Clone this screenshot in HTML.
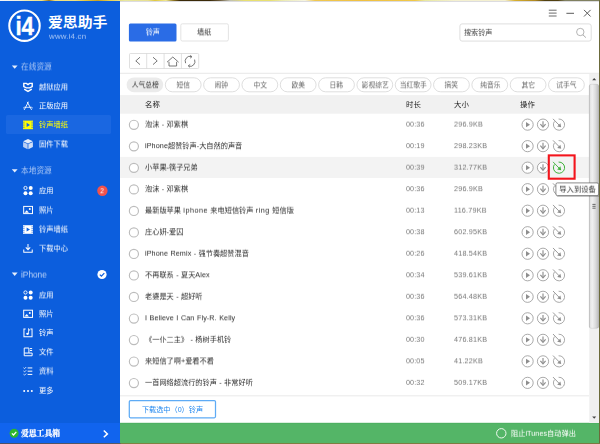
<!DOCTYPE html>
<html lang="zh-CN"><head><meta charset="utf-8"><title>爱思助手</title>
<style>
*{box-sizing:border-box;margin:0;padding:0}
html,body{width:600px;height:444px;overflow:hidden;background:#fff}
body{font-family:"Liberation Sans","Noto Sans CJK SC",sans-serif;font-size:7.1px;color:#333;position:relative}
#app{position:absolute;left:0;top:0;width:600px;height:444px;overflow:hidden;background:#fff}
#bg{position:absolute;left:0;top:0;width:600px;height:444px}
.t{position:absolute;line-height:10px;height:10px;white-space:nowrap}
.serif{font-family:"Liberation Serif","Noto Serif CJK SC",serif}
.sh{left:21px;color:#a9c6f5;font-size:7.7px}
.si{left:38.6px;color:#fff;font-size:7.25px}
.pill{width:36.6px;text-align:center;font-size:6.75px;color:#666}
.th{font-size:7.4px;color:#222}
.nm{left:145.3px;color:#2a2a2a;word-spacing:0.4px;font-size:7.2px}
.l{letter-spacing:0.1px}
.w{letter-spacing:0.5px}
.du{left:406px;color:#757575;font-size:7.2px;letter-spacing:0.12px}
.sz{left:454px;color:#757575;font-size:7.2px;letter-spacing:0.2px}
</style></head>
<body><div id="app">
<svg id="bg" width="600" height="444" viewBox="0 0 600 444">
<rect x="0" y="0" width="120" height="444" fill="#0c5edd"/>
<rect x="0" y="423" width="120" height="21" fill="#1164ee"/>
<rect x="120" y="423" width="480" height="21" fill="#54b567"/><rect x="120" y="422.8" width="480" height="1" fill="#4eae61"/>
<defs><linearGradient id="tg" gradientUnits="userSpaceOnUse" x1="0" y1="0" x2="600" y2="0"><stop offset="0.0000" stop-color="#f2f5fa"/><stop offset="0.0300" stop-color="#f2f2e4"/><stop offset="0.0433" stop-color="#f2ecb0"/><stop offset="0.0700" stop-color="#f0e080"/><stop offset="0.0817" stop-color="#98741c"/><stop offset="0.0917" stop-color="#f0e080"/><stop offset="0.1250" stop-color="#f0e080"/><stop offset="0.1417" stop-color="#e8c840"/><stop offset="0.1633" stop-color="#c8a020"/><stop offset="0.1833" stop-color="#e8d050"/><stop offset="0.2083" stop-color="#e8e8a0"/><stop offset="0.2467" stop-color="#e8e090"/><stop offset="0.2583" stop-color="#e0c840"/><stop offset="0.2767" stop-color="#f0e890"/><stop offset="0.2900" stop-color="#8a7020"/><stop offset="0.3000" stop-color="#3a2a08"/><stop offset="0.3500" stop-color="#3a2a08"/><stop offset="0.3667" stop-color="#706040"/><stop offset="0.3833" stop-color="#c0c0b0"/><stop offset="0.4083" stop-color="#e8e070"/><stop offset="0.4500" stop-color="#e8e070"/><stop offset="0.4750" stop-color="#ececb8"/><stop offset="0.5083" stop-color="#f6f4e0"/><stop offset="0.5250" stop-color="#f0c850"/><stop offset="0.6000" stop-color="#f0c040"/><stop offset="0.6917" stop-color="#f0c848"/><stop offset="0.7083" stop-color="#e8e8a0"/><stop offset="0.7583" stop-color="#f4f0d0"/><stop offset="0.8417" stop-color="#f4f0d0"/><stop offset="0.8583" stop-color="#d8b030"/><stop offset="0.8917" stop-color="#b08820"/><stop offset="0.9083" stop-color="#504010"/><stop offset="0.9300" stop-color="#504010"/><stop offset="0.9417" stop-color="#808060"/><stop offset="1.0000" stop-color="#808060"/></linearGradient><linearGradient id="bgd" gradientUnits="userSpaceOnUse" x1="0" y1="0" x2="600" y2="0"><stop offset="0" stop-color="#4a5068"/><stop offset="0.2" stop-color="#565a64"/><stop offset="0.202" stop-color="#7e8440"/><stop offset="1" stop-color="#7a7a40"/></linearGradient><linearGradient id="thumb" x1="0" y1="0" x2="1" y2="0"><stop offset="0" stop-color="#bdbdbd"/><stop offset="0.14" stop-color="#e6e6e6"/><stop offset="0.32" stop-color="#f0f0f0"/><stop offset="0.62" stop-color="#dedede"/><stop offset="0.86" stop-color="#c8c8c8"/><stop offset="1" stop-color="#b4b4b4"/></linearGradient></defs>
<rect x="120" y="1" width="479" height="1" fill="#dcdce0"/>
<rect x="6" y="115" width="105" height="19" rx="1.5" fill="#1a67e1"/>
<circle cx="24.5" cy="25.7" r="15.2" fill="#0c5edd" stroke="#fff" stroke-width="2.1"/>
<text x="15.4" y="35.1" font-family="Liberation Sans, sans-serif" font-weight="bold" font-size="25" fill="#fff" stroke="#fff" stroke-width="0.4" textLength="18.6" lengthAdjust="spacingAndGlyphs">i4</text>
<path d="M11.8 65.4 h5.8 l-2.9 3.4 Z" fill="#e6eefc"/>
<g transform="translate(22.00 81.00)"><path d="M1.8 2.4 H4.4 L6 3.6 L7.6 2.4 H10.2 V5.6 L7.8 6.9 H4.2 L1.8 5.6 Z" fill="none" stroke="#fff" stroke-width="1.4"/><path d="M2.2 8.2 L6 10.4 L9.8 8.2" fill="none" stroke="#fff" stroke-width="1.4"/></g>
<g transform="translate(22.00 99.70)"><path d="M2.2 10.2 L6.5 2 M5.2 2.2 L9.6 10.2" fill="none" stroke="#fff" stroke-width="0.9"/><path d="M1.2 8.4 L2.4 7.6 H9.6 L10.8 8.4" fill="none" stroke="#fff" stroke-width="0.8"/></g>
<g transform="translate(22.00 118.60)"><rect x="1" y="2" width="10" height="8.6" fill="#ffff00"/><path d="M4.6 4.2 L8 6.3 L4.6 8.4 Z" fill="#1a67e1"/><path d="M1 3.6 h1.6 M1 5.4 h1.6 M1 7.2 h1.6 M1 9 h1.6 M9.4 3.6 h1.6 M9.4 5.4 h1.6 M9.4 7.2 h1.6 M9.4 9 h1.6" stroke="#1a67e1" stroke-width="0.6"/></g>
<g transform="translate(22.00 138.00)"><path d="M6 1 L10.9 3.2 L6 5.5 L1.1 3.2 Z" fill="#e4ecfb"/><path d="M1.1 3.9 L5.6 6.1 V11.2 L1.1 9 Z" fill="#b9cef4"/><path d="M10.9 3.9 L6.4 6.1 V11.2 L10.9 9 Z" fill="#d2e0f8"/></g>
<path d="M11.8 169.2 h5.8 l-2.9 3.4 Z" fill="#e6eefc"/>
<g transform="translate(22.00 184.50) translate(6 6) scale(0.9) translate(-6 -6)"><circle cx="3.2" cy="3.2" r="1.8" fill="none" stroke="#fff" stroke-width="1"/><circle cx="9" cy="3.2" r="2.2" fill="#fff"/><circle cx="3.2" cy="9" r="2.2" fill="#fff"/><circle cx="9" cy="9" r="2.2" fill="#fff"/></g>
<g transform="translate(22.00 204.00) translate(6 6) scale(0.9) translate(-6 -6)"><rect x="1.2" y="2" width="9.8" height="8" fill="none" stroke="#fff" stroke-width="1.1"/><path d="M2 9 L4.6 6.2 L7 9 Z" fill="#fff"/><circle cx="8" cy="5" r="1.1" fill="#fff"/></g>
<g transform="translate(22.00 223.20)"><rect x="1" y="2" width="10" height="8.6" fill="#fff"/><path d="M4.6 4.2 L8 6.3 L4.6 8.4 Z" fill="#0c5edd"/><path d="M1 3.6 h1.6 M1 5.4 h1.6 M1 7.2 h1.6 M1 9 h1.6 M9.4 3.6 h1.6 M9.4 5.4 h1.6 M9.4 7.2 h1.6 M9.4 9 h1.6" stroke="#0c5edd" stroke-width="0.6"/></g>
<g transform="translate(22.00 242.30) translate(6 6) scale(0.92) translate(-6 -6)"><path d="M6 1.4 V7 M3.6 5 L6 7.6 L8.4 5" fill="none" stroke="#fff" stroke-width="1.1"/><path d="M1.4 7.4 V10.4 H10.6 V7.4" fill="none" stroke="#fff" stroke-width="1.1"/></g>
<path d="M11.8 272.6 h5.8 l-2.9 3.4 Z" fill="#e6eefc"/>
<g transform="translate(22.00 289.00) translate(6 6) scale(0.9) translate(-6 -6)"><circle cx="3.2" cy="3.2" r="1.8" fill="none" stroke="#fff" stroke-width="1"/><circle cx="9" cy="3.2" r="2.2" fill="#fff"/><circle cx="3.2" cy="9" r="2.2" fill="#fff"/><circle cx="9" cy="9" r="2.2" fill="#fff"/></g>
<g transform="translate(22.00 307.80) translate(6 6) scale(0.9) translate(-6 -6)"><rect x="1.2" y="2" width="9.8" height="8" fill="none" stroke="#fff" stroke-width="1.1"/><path d="M2 9 L4.6 6.2 L7 9 Z" fill="#fff"/><circle cx="8" cy="5" r="1.1" fill="#fff"/></g>
<g transform="translate(22.00 326.60) translate(6 6) scale(0.92) translate(-6 -6)"><path d="M3.4 2 H1.6 V10.4 H10.4 V2 H8.6" fill="none" stroke="#fff" stroke-width="1.1"/><path d="M6.6 1.6 V7" stroke="#fff" stroke-width="0.9" fill="none"/><path d="M6.6 1.6 Q8 2.4 7.8 4" stroke="#fff" stroke-width="0.8" fill="none"/><ellipse cx="5.5" cy="7.3" rx="1.5" ry="1.2" fill="#fff"/></g>
<g transform="translate(22.00 345.80) translate(6 6) scale(0.9) translate(-6 -6)"><path d="M1.8 1.8 H7 V7.4 H1.8 Z M1.8 7.4 V10.4 H10.6 V7.4 M7 7.4 H10.6 M8.2 2.4 H10.6 M8.2 4.6 H10.6" fill="none" stroke="#fff" stroke-width="1.1"/></g>
<g transform="translate(22.00 365.00) translate(6 6) scale(0.9) translate(-6 -6)"><path d="M5.6 2.6 H10.8 M5.6 6.2 H10.8 M5.6 9.8 H10.8" stroke="#fff" stroke-width="1.1"/><path d="M1 2.4 L2.2 3.4 L4 1.6 M1 6 L2.2 7 L4 5.2 M1 9.6 L2.2 10.6 L4 8.8" stroke="#fff" stroke-width="0.9" fill="none"/></g>
<g transform="translate(22.00 384.50)"><circle cx="2.2" cy="6.6" r="1" fill="#fff"/><circle cx="6" cy="6.6" r="1" fill="#fff"/><circle cx="9.8" cy="6.6" r="1" fill="#fff"/></g>
<circle cx="102.4" cy="190.8" r="5.2" fill="#f2524c"/>
<circle cx="102" cy="274.5" r="4.6" fill="#fff"/><path d="M99.8 274.6 L101.4 276.2 L104.3 273.1" fill="none" stroke="#0c5edd" stroke-width="1.2"/>
<circle cx="14.1" cy="433.3" r="4.5" fill="#2eb62e"/><path d="M11.9 433.4 L13.5 435 L16.3 431.9" fill="none" stroke="#fff" stroke-width="1.3"/>
<path d="M103.8 430.5 L107.4 433.9 L103.8 437.3" fill="none" stroke="#fff" stroke-width="1.5"/>
<rect x="128.9" y="23.4" width="47.6" height="18" rx="1.5" fill="#2a6ce6"/>
<rect x="180.8" y="23.8" width="47.6" height="17.2" rx="1.5" fill="#fff" stroke="#dcdcdc" stroke-width="0.8"/>
<g transform="translate(548 7)" stroke="#5a5a5a" fill="none"><path d="M0.8 3.2 H8.6 M0.8 6.1 H8.6 M0.8 9 H8.6" stroke-width="0.9"/><path d="M18.4 6.3 H26" stroke-width="1"/><path d="M36 2.9 L42.6 9.5 M42.6 2.9 L36 9.5" stroke-width="1"/></g>
<rect x="459.9" y="23.9" width="131.3" height="17.2" rx="2.2" fill="#fff" stroke="#dadada" stroke-width="0.9"/>
<g transform="translate(575 27)" stroke="#a2a2a2" fill="none"><circle cx="5.3" cy="5" r="3.7" stroke-width="0.8"/><path d="M7.9 7.8 L10.9 10.6" stroke-width="0.9"/></g>
<g transform="translate(129 53)"><rect x="0.5" y="0.5" width="69.2" height="15" rx="1" fill="#fff" stroke="#d2d2d2" stroke-width="0.7"/>
<path d="M17.7 0.5 V15.5 M35.1 0.5 V15.5 M52.4 0.5 V15.5" stroke="#d2d2d2" stroke-width="0.7"/>
<g fill="none" stroke="#555"><path d="M11 4.2 L6.8 7.9 L11 11.6" stroke-width="0.8"/>
<path d="M24 4.2 L28.2 7.9 L24 11.6" stroke-width="0.8"/>
<path d="M38 9.2 L43.8 4 L49.6 9.2 M40 8.8 V13 H47.6 V8.8" stroke-width="0.8"/>
<path d="M56.6 10.2 A4.6 4.9 0 0 1 62.4 3.6 M65.6 6.6 A4.6 4.9 0 0 1 59.6 13" stroke-width="0.8"/>
<path d="M61.2 2.2 L63 3.8 L61 5.2 M61 14.4 L59.2 12.8 L61.2 11.4" stroke-width="0.7"/></g></g>
<rect x="120" y="72.8" width="479" height="0.9" fill="#e4e4e4"/>
<rect x="126.60" y="77.4" width="36.6" height="14.8" rx="7.4" fill="#ebebeb"/>
<rect x="165.32" y="77.8" width="35.8" height="14" rx="7" fill="#fff" stroke="#d6d6d6" stroke-width="0.8"/>
<rect x="203.64" y="77.8" width="35.8" height="14" rx="7" fill="#fff" stroke="#d6d6d6" stroke-width="0.8"/>
<rect x="241.96" y="77.8" width="35.8" height="14" rx="7" fill="#fff" stroke="#d6d6d6" stroke-width="0.8"/>
<rect x="280.28" y="77.8" width="35.8" height="14" rx="7" fill="#fff" stroke="#d6d6d6" stroke-width="0.8"/>
<rect x="318.60" y="77.8" width="35.8" height="14" rx="7" fill="#fff" stroke="#d6d6d6" stroke-width="0.8"/>
<rect x="356.92" y="77.8" width="35.8" height="14" rx="7" fill="#fff" stroke="#d6d6d6" stroke-width="0.8"/>
<rect x="395.24" y="77.8" width="35.8" height="14" rx="7" fill="#fff" stroke="#d6d6d6" stroke-width="0.8"/>
<rect x="433.56" y="77.8" width="35.8" height="14" rx="7" fill="#fff" stroke="#d6d6d6" stroke-width="0.8"/>
<rect x="471.88" y="77.8" width="35.8" height="14" rx="7" fill="#fff" stroke="#d6d6d6" stroke-width="0.8"/>
<rect x="510.20" y="77.8" width="35.8" height="14" rx="7" fill="#fff" stroke="#d6d6d6" stroke-width="0.8"/>
<rect x="548.52" y="77.8" width="35.8" height="14" rx="7" fill="#fff" stroke="#d6d6d6" stroke-width="0.8"/>
<rect x="120.1" y="95.1" width="469.1" height="18.6" fill="#f1f1f1"/>
<rect x="120.1" y="156.9" width="469.1" height="21.1" fill="#f3f3f3"/>
<circle cx="133.9" cy="124.83" r="4.55" fill="#fff" stroke="#bcbcbc" stroke-width="1.15"/>
<g transform="translate(520.40 117.63)"><circle cx="7.2" cy="7" r="5.6" fill="#fff" stroke="#8e8e8e" stroke-width="0.75"/>
<path d="M5.6 4.3 L9.6 7 L5.6 9.7 Z" fill="#8e8e8e"/>
<circle cx="22.6" cy="7" r="5.6" fill="#fff" stroke="#8e8e8e" stroke-width="0.75"/>
<path d="M22.6 3.6 V9" fill="none" stroke="#8e8e8e" stroke-width="1.15"/><path d="M20 6.5 L22.6 9.6 L25.2 6.5" fill="none" stroke="#8e8e8e" stroke-width="1.15"/>
<g transform="translate(-0.4 0)"><path d="M34.4 3.8 A5.6 5.6 0 1 0 38.6 1.4" fill="none" stroke="#8e8e8e" stroke-width="0.75"/>
<path d="M33 1.2 L39.6 8" fill="none" stroke="#8e8e8e" stroke-width="0.9"/>
<path d="M41.2 9.6 L37.2 8.8 L40.4 5.6 Z" fill="#8e8e8e"/></g></g>
<circle cx="133.9" cy="146.35" r="4.55" fill="#fff" stroke="#bcbcbc" stroke-width="1.15"/>
<g transform="translate(520.40 139.15)"><circle cx="7.2" cy="7" r="5.6" fill="#fff" stroke="#8e8e8e" stroke-width="0.75"/>
<path d="M5.6 4.3 L9.6 7 L5.6 9.7 Z" fill="#8e8e8e"/>
<circle cx="22.6" cy="7" r="5.6" fill="#fff" stroke="#8e8e8e" stroke-width="0.75"/>
<path d="M22.6 3.6 V9" fill="none" stroke="#8e8e8e" stroke-width="1.15"/><path d="M20 6.5 L22.6 9.6 L25.2 6.5" fill="none" stroke="#8e8e8e" stroke-width="1.15"/>
<g transform="translate(-0.4 0)"><path d="M34.4 3.8 A5.6 5.6 0 1 0 38.6 1.4" fill="none" stroke="#8e8e8e" stroke-width="0.75"/>
<path d="M33 1.2 L39.6 8" fill="none" stroke="#8e8e8e" stroke-width="0.9"/>
<path d="M41.2 9.6 L37.2 8.8 L40.4 5.6 Z" fill="#8e8e8e"/></g></g>
<circle cx="133.9" cy="167.87" r="4.55" fill="#fff" stroke="#bcbcbc" stroke-width="1.15"/>
<g transform="translate(520.40 160.67)"><circle cx="7.2" cy="7" r="5.6" fill="#fff" stroke="#8e8e8e" stroke-width="0.75"/>
<path d="M5.6 4.3 L9.6 7 L5.6 9.7 Z" fill="#8e8e8e"/>
<circle cx="22.6" cy="7" r="5.6" fill="#fff" stroke="#8e8e8e" stroke-width="0.75"/>
<path d="M22.6 3.6 V9" fill="none" stroke="#8e8e8e" stroke-width="1.15"/><path d="M20 6.5 L22.6 9.6 L25.2 6.5" fill="none" stroke="#8e8e8e" stroke-width="1.15"/>
<g transform="translate(-0.4 0)"><path d="M34.4 3.8 A5.6 5.6 0 1 0 38.6 1.4" fill="none" stroke="#3fb23a" stroke-width="1.0"/>
<path d="M33 1.2 L39.6 8" fill="none" stroke="#3fb23a" stroke-width="0.9"/>
<path d="M41.2 9.6 L37.2 8.8 L40.4 5.6 Z" fill="#3fb23a"/></g></g>
<circle cx="133.9" cy="189.39" r="4.55" fill="#fff" stroke="#bcbcbc" stroke-width="1.15"/>
<g transform="translate(520.40 182.19)"><circle cx="7.2" cy="7" r="5.6" fill="#fff" stroke="#8e8e8e" stroke-width="0.75"/>
<path d="M5.6 4.3 L9.6 7 L5.6 9.7 Z" fill="#8e8e8e"/>
<circle cx="22.6" cy="7" r="5.6" fill="#fff" stroke="#8e8e8e" stroke-width="0.75"/>
<path d="M22.6 3.6 V9" fill="none" stroke="#8e8e8e" stroke-width="1.15"/><path d="M20 6.5 L22.6 9.6 L25.2 6.5" fill="none" stroke="#8e8e8e" stroke-width="1.15"/>
<g transform="translate(-0.4 0)"><path d="M34.4 3.8 A5.6 5.6 0 1 0 38.6 1.4" fill="none" stroke="#8e8e8e" stroke-width="0.75"/>
<path d="M33 1.2 L39.6 8" fill="none" stroke="#8e8e8e" stroke-width="0.9"/>
<path d="M41.2 9.6 L37.2 8.8 L40.4 5.6 Z" fill="#8e8e8e"/></g></g>
<circle cx="133.9" cy="210.91" r="4.55" fill="#fff" stroke="#bcbcbc" stroke-width="1.15"/>
<g transform="translate(520.40 203.71)"><circle cx="7.2" cy="7" r="5.6" fill="#fff" stroke="#8e8e8e" stroke-width="0.75"/>
<path d="M5.6 4.3 L9.6 7 L5.6 9.7 Z" fill="#8e8e8e"/>
<circle cx="22.6" cy="7" r="5.6" fill="#fff" stroke="#8e8e8e" stroke-width="0.75"/>
<path d="M22.6 3.6 V9" fill="none" stroke="#8e8e8e" stroke-width="1.15"/><path d="M20 6.5 L22.6 9.6 L25.2 6.5" fill="none" stroke="#8e8e8e" stroke-width="1.15"/>
<g transform="translate(-0.4 0)"><path d="M34.4 3.8 A5.6 5.6 0 1 0 38.6 1.4" fill="none" stroke="#8e8e8e" stroke-width="0.75"/>
<path d="M33 1.2 L39.6 8" fill="none" stroke="#8e8e8e" stroke-width="0.9"/>
<path d="M41.2 9.6 L37.2 8.8 L40.4 5.6 Z" fill="#8e8e8e"/></g></g>
<circle cx="133.9" cy="232.43" r="4.55" fill="#fff" stroke="#bcbcbc" stroke-width="1.15"/>
<g transform="translate(520.40 225.23)"><circle cx="7.2" cy="7" r="5.6" fill="#fff" stroke="#8e8e8e" stroke-width="0.75"/>
<path d="M5.6 4.3 L9.6 7 L5.6 9.7 Z" fill="#8e8e8e"/>
<circle cx="22.6" cy="7" r="5.6" fill="#fff" stroke="#8e8e8e" stroke-width="0.75"/>
<path d="M22.6 3.6 V9" fill="none" stroke="#8e8e8e" stroke-width="1.15"/><path d="M20 6.5 L22.6 9.6 L25.2 6.5" fill="none" stroke="#8e8e8e" stroke-width="1.15"/>
<g transform="translate(-0.4 0)"><path d="M34.4 3.8 A5.6 5.6 0 1 0 38.6 1.4" fill="none" stroke="#8e8e8e" stroke-width="0.75"/>
<path d="M33 1.2 L39.6 8" fill="none" stroke="#8e8e8e" stroke-width="0.9"/>
<path d="M41.2 9.6 L37.2 8.8 L40.4 5.6 Z" fill="#8e8e8e"/></g></g>
<circle cx="133.9" cy="253.95" r="4.55" fill="#fff" stroke="#bcbcbc" stroke-width="1.15"/>
<g transform="translate(520.40 246.75)"><circle cx="7.2" cy="7" r="5.6" fill="#fff" stroke="#8e8e8e" stroke-width="0.75"/>
<path d="M5.6 4.3 L9.6 7 L5.6 9.7 Z" fill="#8e8e8e"/>
<circle cx="22.6" cy="7" r="5.6" fill="#fff" stroke="#8e8e8e" stroke-width="0.75"/>
<path d="M22.6 3.6 V9" fill="none" stroke="#8e8e8e" stroke-width="1.15"/><path d="M20 6.5 L22.6 9.6 L25.2 6.5" fill="none" stroke="#8e8e8e" stroke-width="1.15"/>
<g transform="translate(-0.4 0)"><path d="M34.4 3.8 A5.6 5.6 0 1 0 38.6 1.4" fill="none" stroke="#8e8e8e" stroke-width="0.75"/>
<path d="M33 1.2 L39.6 8" fill="none" stroke="#8e8e8e" stroke-width="0.9"/>
<path d="M41.2 9.6 L37.2 8.8 L40.4 5.6 Z" fill="#8e8e8e"/></g></g>
<circle cx="133.9" cy="275.47" r="4.55" fill="#fff" stroke="#bcbcbc" stroke-width="1.15"/>
<g transform="translate(520.40 268.27)"><circle cx="7.2" cy="7" r="5.6" fill="#fff" stroke="#8e8e8e" stroke-width="0.75"/>
<path d="M5.6 4.3 L9.6 7 L5.6 9.7 Z" fill="#8e8e8e"/>
<circle cx="22.6" cy="7" r="5.6" fill="#fff" stroke="#8e8e8e" stroke-width="0.75"/>
<path d="M22.6 3.6 V9" fill="none" stroke="#8e8e8e" stroke-width="1.15"/><path d="M20 6.5 L22.6 9.6 L25.2 6.5" fill="none" stroke="#8e8e8e" stroke-width="1.15"/>
<g transform="translate(-0.4 0)"><path d="M34.4 3.8 A5.6 5.6 0 1 0 38.6 1.4" fill="none" stroke="#8e8e8e" stroke-width="0.75"/>
<path d="M33 1.2 L39.6 8" fill="none" stroke="#8e8e8e" stroke-width="0.9"/>
<path d="M41.2 9.6 L37.2 8.8 L40.4 5.6 Z" fill="#8e8e8e"/></g></g>
<circle cx="133.9" cy="296.99" r="4.55" fill="#fff" stroke="#bcbcbc" stroke-width="1.15"/>
<g transform="translate(520.40 289.79)"><circle cx="7.2" cy="7" r="5.6" fill="#fff" stroke="#8e8e8e" stroke-width="0.75"/>
<path d="M5.6 4.3 L9.6 7 L5.6 9.7 Z" fill="#8e8e8e"/>
<circle cx="22.6" cy="7" r="5.6" fill="#fff" stroke="#8e8e8e" stroke-width="0.75"/>
<path d="M22.6 3.6 V9" fill="none" stroke="#8e8e8e" stroke-width="1.15"/><path d="M20 6.5 L22.6 9.6 L25.2 6.5" fill="none" stroke="#8e8e8e" stroke-width="1.15"/>
<g transform="translate(-0.4 0)"><path d="M34.4 3.8 A5.6 5.6 0 1 0 38.6 1.4" fill="none" stroke="#8e8e8e" stroke-width="0.75"/>
<path d="M33 1.2 L39.6 8" fill="none" stroke="#8e8e8e" stroke-width="0.9"/>
<path d="M41.2 9.6 L37.2 8.8 L40.4 5.6 Z" fill="#8e8e8e"/></g></g>
<circle cx="133.9" cy="318.51" r="4.55" fill="#fff" stroke="#bcbcbc" stroke-width="1.15"/>
<g transform="translate(520.40 311.31)"><circle cx="7.2" cy="7" r="5.6" fill="#fff" stroke="#8e8e8e" stroke-width="0.75"/>
<path d="M5.6 4.3 L9.6 7 L5.6 9.7 Z" fill="#8e8e8e"/>
<circle cx="22.6" cy="7" r="5.6" fill="#fff" stroke="#8e8e8e" stroke-width="0.75"/>
<path d="M22.6 3.6 V9" fill="none" stroke="#8e8e8e" stroke-width="1.15"/><path d="M20 6.5 L22.6 9.6 L25.2 6.5" fill="none" stroke="#8e8e8e" stroke-width="1.15"/>
<g transform="translate(-0.4 0)"><path d="M34.4 3.8 A5.6 5.6 0 1 0 38.6 1.4" fill="none" stroke="#8e8e8e" stroke-width="0.75"/>
<path d="M33 1.2 L39.6 8" fill="none" stroke="#8e8e8e" stroke-width="0.9"/>
<path d="M41.2 9.6 L37.2 8.8 L40.4 5.6 Z" fill="#8e8e8e"/></g></g>
<circle cx="133.9" cy="340.03" r="4.55" fill="#fff" stroke="#bcbcbc" stroke-width="1.15"/>
<g transform="translate(520.40 332.83)"><circle cx="7.2" cy="7" r="5.6" fill="#fff" stroke="#8e8e8e" stroke-width="0.75"/>
<path d="M5.6 4.3 L9.6 7 L5.6 9.7 Z" fill="#8e8e8e"/>
<circle cx="22.6" cy="7" r="5.6" fill="#fff" stroke="#8e8e8e" stroke-width="0.75"/>
<path d="M22.6 3.6 V9" fill="none" stroke="#8e8e8e" stroke-width="1.15"/><path d="M20 6.5 L22.6 9.6 L25.2 6.5" fill="none" stroke="#8e8e8e" stroke-width="1.15"/>
<g transform="translate(-0.4 0)"><path d="M34.4 3.8 A5.6 5.6 0 1 0 38.6 1.4" fill="none" stroke="#8e8e8e" stroke-width="0.75"/>
<path d="M33 1.2 L39.6 8" fill="none" stroke="#8e8e8e" stroke-width="0.9"/>
<path d="M41.2 9.6 L37.2 8.8 L40.4 5.6 Z" fill="#8e8e8e"/></g></g>
<circle cx="133.9" cy="361.55" r="4.55" fill="#fff" stroke="#bcbcbc" stroke-width="1.15"/>
<g transform="translate(520.40 354.35)"><circle cx="7.2" cy="7" r="5.6" fill="#fff" stroke="#8e8e8e" stroke-width="0.75"/>
<path d="M5.6 4.3 L9.6 7 L5.6 9.7 Z" fill="#8e8e8e"/>
<circle cx="22.6" cy="7" r="5.6" fill="#fff" stroke="#8e8e8e" stroke-width="0.75"/>
<path d="M22.6 3.6 V9" fill="none" stroke="#8e8e8e" stroke-width="1.15"/><path d="M20 6.5 L22.6 9.6 L25.2 6.5" fill="none" stroke="#8e8e8e" stroke-width="1.15"/>
<g transform="translate(-0.4 0)"><path d="M34.4 3.8 A5.6 5.6 0 1 0 38.6 1.4" fill="none" stroke="#8e8e8e" stroke-width="0.75"/>
<path d="M33 1.2 L39.6 8" fill="none" stroke="#8e8e8e" stroke-width="0.9"/>
<path d="M41.2 9.6 L37.2 8.8 L40.4 5.6 Z" fill="#8e8e8e"/></g></g>
<circle cx="133.9" cy="383.07" r="4.55" fill="#fff" stroke="#bcbcbc" stroke-width="1.15"/>
<g transform="translate(520.40 375.87)"><circle cx="7.2" cy="7" r="5.6" fill="#fff" stroke="#8e8e8e" stroke-width="0.75"/>
<path d="M5.6 4.3 L9.6 7 L5.6 9.7 Z" fill="#8e8e8e"/>
<circle cx="22.6" cy="7" r="5.6" fill="#fff" stroke="#8e8e8e" stroke-width="0.75"/>
<path d="M22.6 3.6 V9" fill="none" stroke="#8e8e8e" stroke-width="1.15"/><path d="M20 6.5 L22.6 9.6 L25.2 6.5" fill="none" stroke="#8e8e8e" stroke-width="1.15"/>
<g transform="translate(-0.4 0)"><path d="M34.4 3.8 A5.6 5.6 0 1 0 38.6 1.4" fill="none" stroke="#8e8e8e" stroke-width="0.75"/>
<path d="M33 1.2 L39.6 8" fill="none" stroke="#8e8e8e" stroke-width="0.9"/>
<path d="M41.2 9.6 L37.2 8.8 L40.4 5.6 Z" fill="#8e8e8e"/></g></g>
<rect x="548.8" y="155.4" width="25.8" height="23.3" fill="none" stroke="#f3141c" stroke-width="2.1"/>
<rect x="589.2" y="74" width="9.8" height="349" fill="#f0f0f0"/>
<rect x="589.2" y="84.3" width="9.6" height="244" rx="2" fill="url(#thumb)" stroke="#000" stroke-opacity="0.10" stroke-width="0.8"/>
<path d="M592.2 80.2 L594.2 78 L596.2 80.2 Z" fill="#444"/><path d="M592.2 416.6 L594.2 418.8 L596.2 416.6 Z" fill="#444"/><path d="M592.4 204.4 H595.6 M592.4 206.3 H595.6 M592.4 208.2 H595.6" stroke="#5a5a5a" stroke-width="0.9"/>
<rect x="556.6" y="183.8" width="43" height="13.2" rx="1.6" fill="#000" opacity="0.2"/>
<rect x="555.9" y="182.9" width="42.7" height="12.7" rx="1.6" fill="#fff" stroke="#6e6e6e" stroke-width="0.8"/>
<rect x="120" y="395.4" width="469" height="0.9" fill="#e6e6e6"/>
<rect x="129.3" y="400.6" width="86.2" height="17.2" rx="1.2" fill="#fff" stroke="#5eabf5" stroke-width="1.25"/>
<circle cx="501.3" cy="433.3" r="4.7" fill="none" stroke="#f0faf0" stroke-width="1"/>
<rect x="0" y="0" width="600" height="1" fill="url(#tg)"/>
<rect x="599" y="0" width="1" height="444" fill="#6b6a3a"/>
<rect x="0" y="443" width="600" height="1" fill="url(#bgd)"/>
</svg>
<div class="t" style="left:48.4px;top:14.3px;height:18px;font-size:13.4px;line-height:18px;font-weight:700;color:#fff;transform:scaleX(1.11);transform-origin:0 50%">爱思助手</div>
<div class="t " style="top:31px;left:48.8px;font-size:7.9px;letter-spacing:0.2px;color:#a9c6f5;transform:translateY(0.8px) rotate(0.02deg);will-change:transform">www.i4.cn</div>
<div class="t sh" style="top:62px;;transform:translateY(0.4px) rotate(0.02deg);will-change:transform">在线资源</div>
<div class="t si" style="top:82px;;transform:translateY(0.4px) rotate(0.02deg);will-change:transform">越狱应用</div>
<div class="t si" style="top:101px;;transform:translateY(0.1px) rotate(0.02deg);will-change:transform">正版应用</div>
<div class="t si" style="top:120px;color:#ffff00;transform:translateY(0.0px) rotate(0.02deg);will-change:transform">铃声墙纸</div>
<div class="t si" style="top:139px;;transform:translateY(0.4px) rotate(0.02deg);will-change:transform">固件下载</div>
<div class="t sh" style="top:166px;;transform:translateY(0.2px) rotate(0.02deg);will-change:transform">本地资源</div>
<div class="t si" style="top:185px;;transform:translateY(0.9px) rotate(0.02deg);will-change:transform">应用</div>
<div class="t si" style="top:205px;;transform:translateY(0.4px) rotate(0.02deg);will-change:transform">照片</div>
<div class="t si" style="top:224px;;transform:translateY(0.6px) rotate(0.02deg);will-change:transform">铃声墙纸</div>
<div class="t si" style="top:243px;;transform:translateY(0.7px) rotate(0.02deg);will-change:transform">下载中心</div>
<div class="t sh" style="top:269px;;transform:translateY(0.6px) rotate(0.02deg);will-change:transform"><span style="font-size:8.3px;color:#bcd4f8">iPhone</span></div>
<div class="t si" style="top:290px;;transform:translateY(0.4px) rotate(0.02deg);will-change:transform">应用</div>
<div class="t si" style="top:309px;;transform:translateY(0.2px) rotate(0.02deg);will-change:transform">照片</div>
<div class="t si" style="top:328px;;transform:translateY(0.0px) rotate(0.02deg);will-change:transform">铃声</div>
<div class="t si" style="top:347px;;transform:translateY(0.2px) rotate(0.02deg);will-change:transform">文件</div>
<div class="t si" style="top:366px;;transform:translateY(0.4px) rotate(0.02deg);will-change:transform">资料</div>
<div class="t si" style="top:385px;;transform:translateY(0.9px) rotate(0.02deg);will-change:transform">更多</div>
<div class="t " style="top:186px;left:97.4px;width:10px;text-align:center;color:#fff;font-size:6.6px;transform:translateY(0.3px) rotate(0.02deg);will-change:transform">2</div>
<div class="t serif" style="top:429px;left:21px;font-size:7.8px;font-weight:bold;color:#fff;-webkit-text-stroke:0.25px #fff;transform:translateY(0.0px) rotate(0.02deg);will-change:transform">爱思工具箱</div>
<div class="t " style="top:27px;left:128.9px;width:47.6px;text-align:center;color:#fff;transform:translateY(0.4px) rotate(0.02deg);will-change:transform">铃声</div>
<div class="t " style="top:27px;left:180.4px;width:48.4px;text-align:center;color:#333;transform:translateY(0.4px) rotate(0.02deg);will-change:transform">墙纸</div>
<div class="t " style="top:27px;left:464px;color:#444;transform:translateY(0.9px) rotate(0.02deg);will-change:transform">搜索铃声</div>
<div class="t pill" style="top:80px;left:126.6px;color:#333;transform:translateY(0.3px) rotate(0.02deg);will-change:transform">人气总榜</div>
<div class="t pill" style="top:80px;left:164.9px;;transform:translateY(0.3px) rotate(0.02deg);will-change:transform">短信</div>
<div class="t pill" style="top:80px;left:203.2px;;transform:translateY(0.3px) rotate(0.02deg);will-change:transform">闹钟</div>
<div class="t pill" style="top:80px;left:241.6px;;transform:translateY(0.3px) rotate(0.02deg);will-change:transform">中文</div>
<div class="t pill" style="top:80px;left:279.9px;;transform:translateY(0.3px) rotate(0.02deg);will-change:transform">欧美</div>
<div class="t pill" style="top:80px;left:318.2px;;transform:translateY(0.3px) rotate(0.02deg);will-change:transform">日韩</div>
<div class="t pill" style="top:80px;left:356.5px;;transform:translateY(0.3px) rotate(0.02deg);will-change:transform">影视综艺</div>
<div class="t pill" style="top:80px;left:394.8px;;transform:translateY(0.3px) rotate(0.02deg);will-change:transform">当红歌手</div>
<div class="t pill" style="top:80px;left:433.2px;;transform:translateY(0.3px) rotate(0.02deg);will-change:transform">搞笑</div>
<div class="t pill" style="top:80px;left:471.5px;;transform:translateY(0.3px) rotate(0.02deg);will-change:transform">纯音乐</div>
<div class="t pill" style="top:80px;left:509.8px;;transform:translateY(0.3px) rotate(0.02deg);will-change:transform">其它</div>
<div class="t pill" style="top:80px;left:548.1px;;transform:translateY(0.3px) rotate(0.02deg);will-change:transform">试手气</div>
<div class="t th" style="top:100px;left:144.9px;;transform:translateY(0.0px) rotate(0.02deg);will-change:transform">名称</div>
<div class="t th" style="top:100px;left:405.6px;;transform:translateY(0.0px) rotate(0.02deg);will-change:transform">时长</div>
<div class="t th" style="top:100px;left:453.6px;;transform:translateY(0.0px) rotate(0.02deg);will-change:transform">大小</div>
<div class="t th" style="top:100px;left:519.6px;;transform:translateY(0.0px) rotate(0.02deg);will-change:transform">操作</div>
<div class="t nm" style="top:119px;;transform:translateY(0.63px) rotate(0.02deg);will-change:transform">泡沫 - 邓紫棋</div>
<div class="t du" style="top:119px;;transform:translateY(0.63px) rotate(0.02deg);will-change:transform">00:36</div>
<div class="t sz" style="top:119px;;transform:translateY(0.63px) rotate(0.02deg);will-change:transform">296.9KB</div>
<div class="t nm" style="top:141px;;transform:translateY(0.15px) rotate(0.02deg);will-change:transform"><span class="l">iPhone</span>超赞铃声-大自然的声音</div>
<div class="t du" style="top:141px;;transform:translateY(0.15px) rotate(0.02deg);will-change:transform">00:19</div>
<div class="t sz" style="top:141px;;transform:translateY(0.15px) rotate(0.02deg);will-change:transform">298.23KB</div>
<div class="t nm" style="top:162px;;transform:translateY(0.67px) rotate(0.02deg);will-change:transform">小苹果-筷子兄弟</div>
<div class="t du" style="top:162px;;transform:translateY(0.67px) rotate(0.02deg);will-change:transform">00:39</div>
<div class="t sz" style="top:162px;;transform:translateY(0.67px) rotate(0.02deg);will-change:transform">312.77KB</div>
<div class="t nm" style="top:184px;;transform:translateY(0.19px) rotate(0.02deg);will-change:transform">泡沫 - 邓紫棋</div>
<div class="t du" style="top:184px;;transform:translateY(0.19px) rotate(0.02deg);will-change:transform">00:36</div>
<div class="t sz" style="top:184px;;transform:translateY(0.19px) rotate(0.02deg);will-change:transform">296.9KB</div>
<div class="t nm" style="top:205px;;transform:translateY(0.71px) rotate(0.02deg);will-change:transform">最新版苹果 <span class="w">iphone</span> 来电短信铃声 <span class="w">ring</span> 短信版</div>
<div class="t du" style="top:205px;;transform:translateY(0.71px) rotate(0.02deg);will-change:transform">00:13</div>
<div class="t sz" style="top:205px;;transform:translateY(0.71px) rotate(0.02deg);will-change:transform">116.79KB</div>
<div class="t nm" style="top:227px;;transform:translateY(0.23px) rotate(0.02deg);will-change:transform">庄心妍-爱囚</div>
<div class="t du" style="top:227px;;transform:translateY(0.23px) rotate(0.02deg);will-change:transform">00:38</div>
<div class="t sz" style="top:227px;;transform:translateY(0.23px) rotate(0.02deg);will-change:transform">602.95KB</div>
<div class="t nm" style="top:248px;;transform:translateY(0.75px) rotate(0.02deg);will-change:transform"><span class="l">iPhone Remix</span> - 强节奏超赞混音</div>
<div class="t du" style="top:248px;;transform:translateY(0.75px) rotate(0.02deg);will-change:transform">00:26</div>
<div class="t sz" style="top:248px;;transform:translateY(0.75px) rotate(0.02deg);will-change:transform">418.54KB</div>
<div class="t nm" style="top:270px;;transform:translateY(0.27px) rotate(0.02deg);will-change:transform">不再联系 - 夏天<span class="l">Alex</span></div>
<div class="t du" style="top:270px;;transform:translateY(0.27px) rotate(0.02deg);will-change:transform">00:34</div>
<div class="t sz" style="top:270px;;transform:translateY(0.27px) rotate(0.02deg);will-change:transform">539.61KB</div>
<div class="t nm" style="top:291px;;transform:translateY(0.79px) rotate(0.02deg);will-change:transform">老婆是天 - 超好听</div>
<div class="t du" style="top:291px;;transform:translateY(0.79px) rotate(0.02deg);will-change:transform">00:36</div>
<div class="t sz" style="top:291px;;transform:translateY(0.79px) rotate(0.02deg);will-change:transform">564.48KB</div>
<div class="t nm" style="top:313px;;transform:translateY(0.31px) rotate(0.02deg);will-change:transform"><span class="l">I Believe I Can Fly-R. Kelly</span></div>
<div class="t du" style="top:313px;;transform:translateY(0.31px) rotate(0.02deg);will-change:transform">00:36</div>
<div class="t sz" style="top:313px;;transform:translateY(0.31px) rotate(0.02deg);will-change:transform">573.31KB</div>
<div class="t nm" style="top:334px;;transform:translateY(0.83px) rotate(0.02deg);will-change:transform">《一仆二主》 - 杨树手机铃</div>
<div class="t du" style="top:334px;;transform:translateY(0.83px) rotate(0.02deg);will-change:transform">00:30</div>
<div class="t sz" style="top:334px;;transform:translateY(0.83px) rotate(0.02deg);will-change:transform">476.81KB</div>
<div class="t nm" style="top:356px;;transform:translateY(0.35px) rotate(0.02deg);will-change:transform">来短信了啊+爱看不看</div>
<div class="t du" style="top:356px;;transform:translateY(0.35px) rotate(0.02deg);will-change:transform">00:05</div>
<div class="t sz" style="top:356px;;transform:translateY(0.35px) rotate(0.02deg);will-change:transform">41.22KB</div>
<div class="t nm" style="top:377px;;transform:translateY(0.87px) rotate(0.02deg);will-change:transform">一首网络超流行的铃声 - 非常好听</div>
<div class="t du" style="top:377px;;transform:translateY(0.87px) rotate(0.02deg);will-change:transform">00:32</div>
<div class="t sz" style="top:377px;;transform:translateY(0.87px) rotate(0.02deg);will-change:transform">509.17KB</div>
<div class="t " style="top:184px;left:556.4px;width:43.2px;text-align:center;font-size:7.35px;color:#383838;transform:translateY(0.7px) rotate(0.02deg);will-change:transform">导入到设备</div>
<div class="t " style="top:405px;left:128.8px;width:87px;text-align:center;color:#2187ef;font-size:7.15px;transform:translateY(0.0px) rotate(0.02deg);will-change:transform">下载选中（0）铃声</div>
<div class="t " style="top:428px;left:510.5px;font-size:7.2px;letter-spacing:0.05px;color:#fff;transform:translateY(0.8px) rotate(0.02deg);will-change:transform">阻止iTunes自动弹出</div>
</div></body></html>
